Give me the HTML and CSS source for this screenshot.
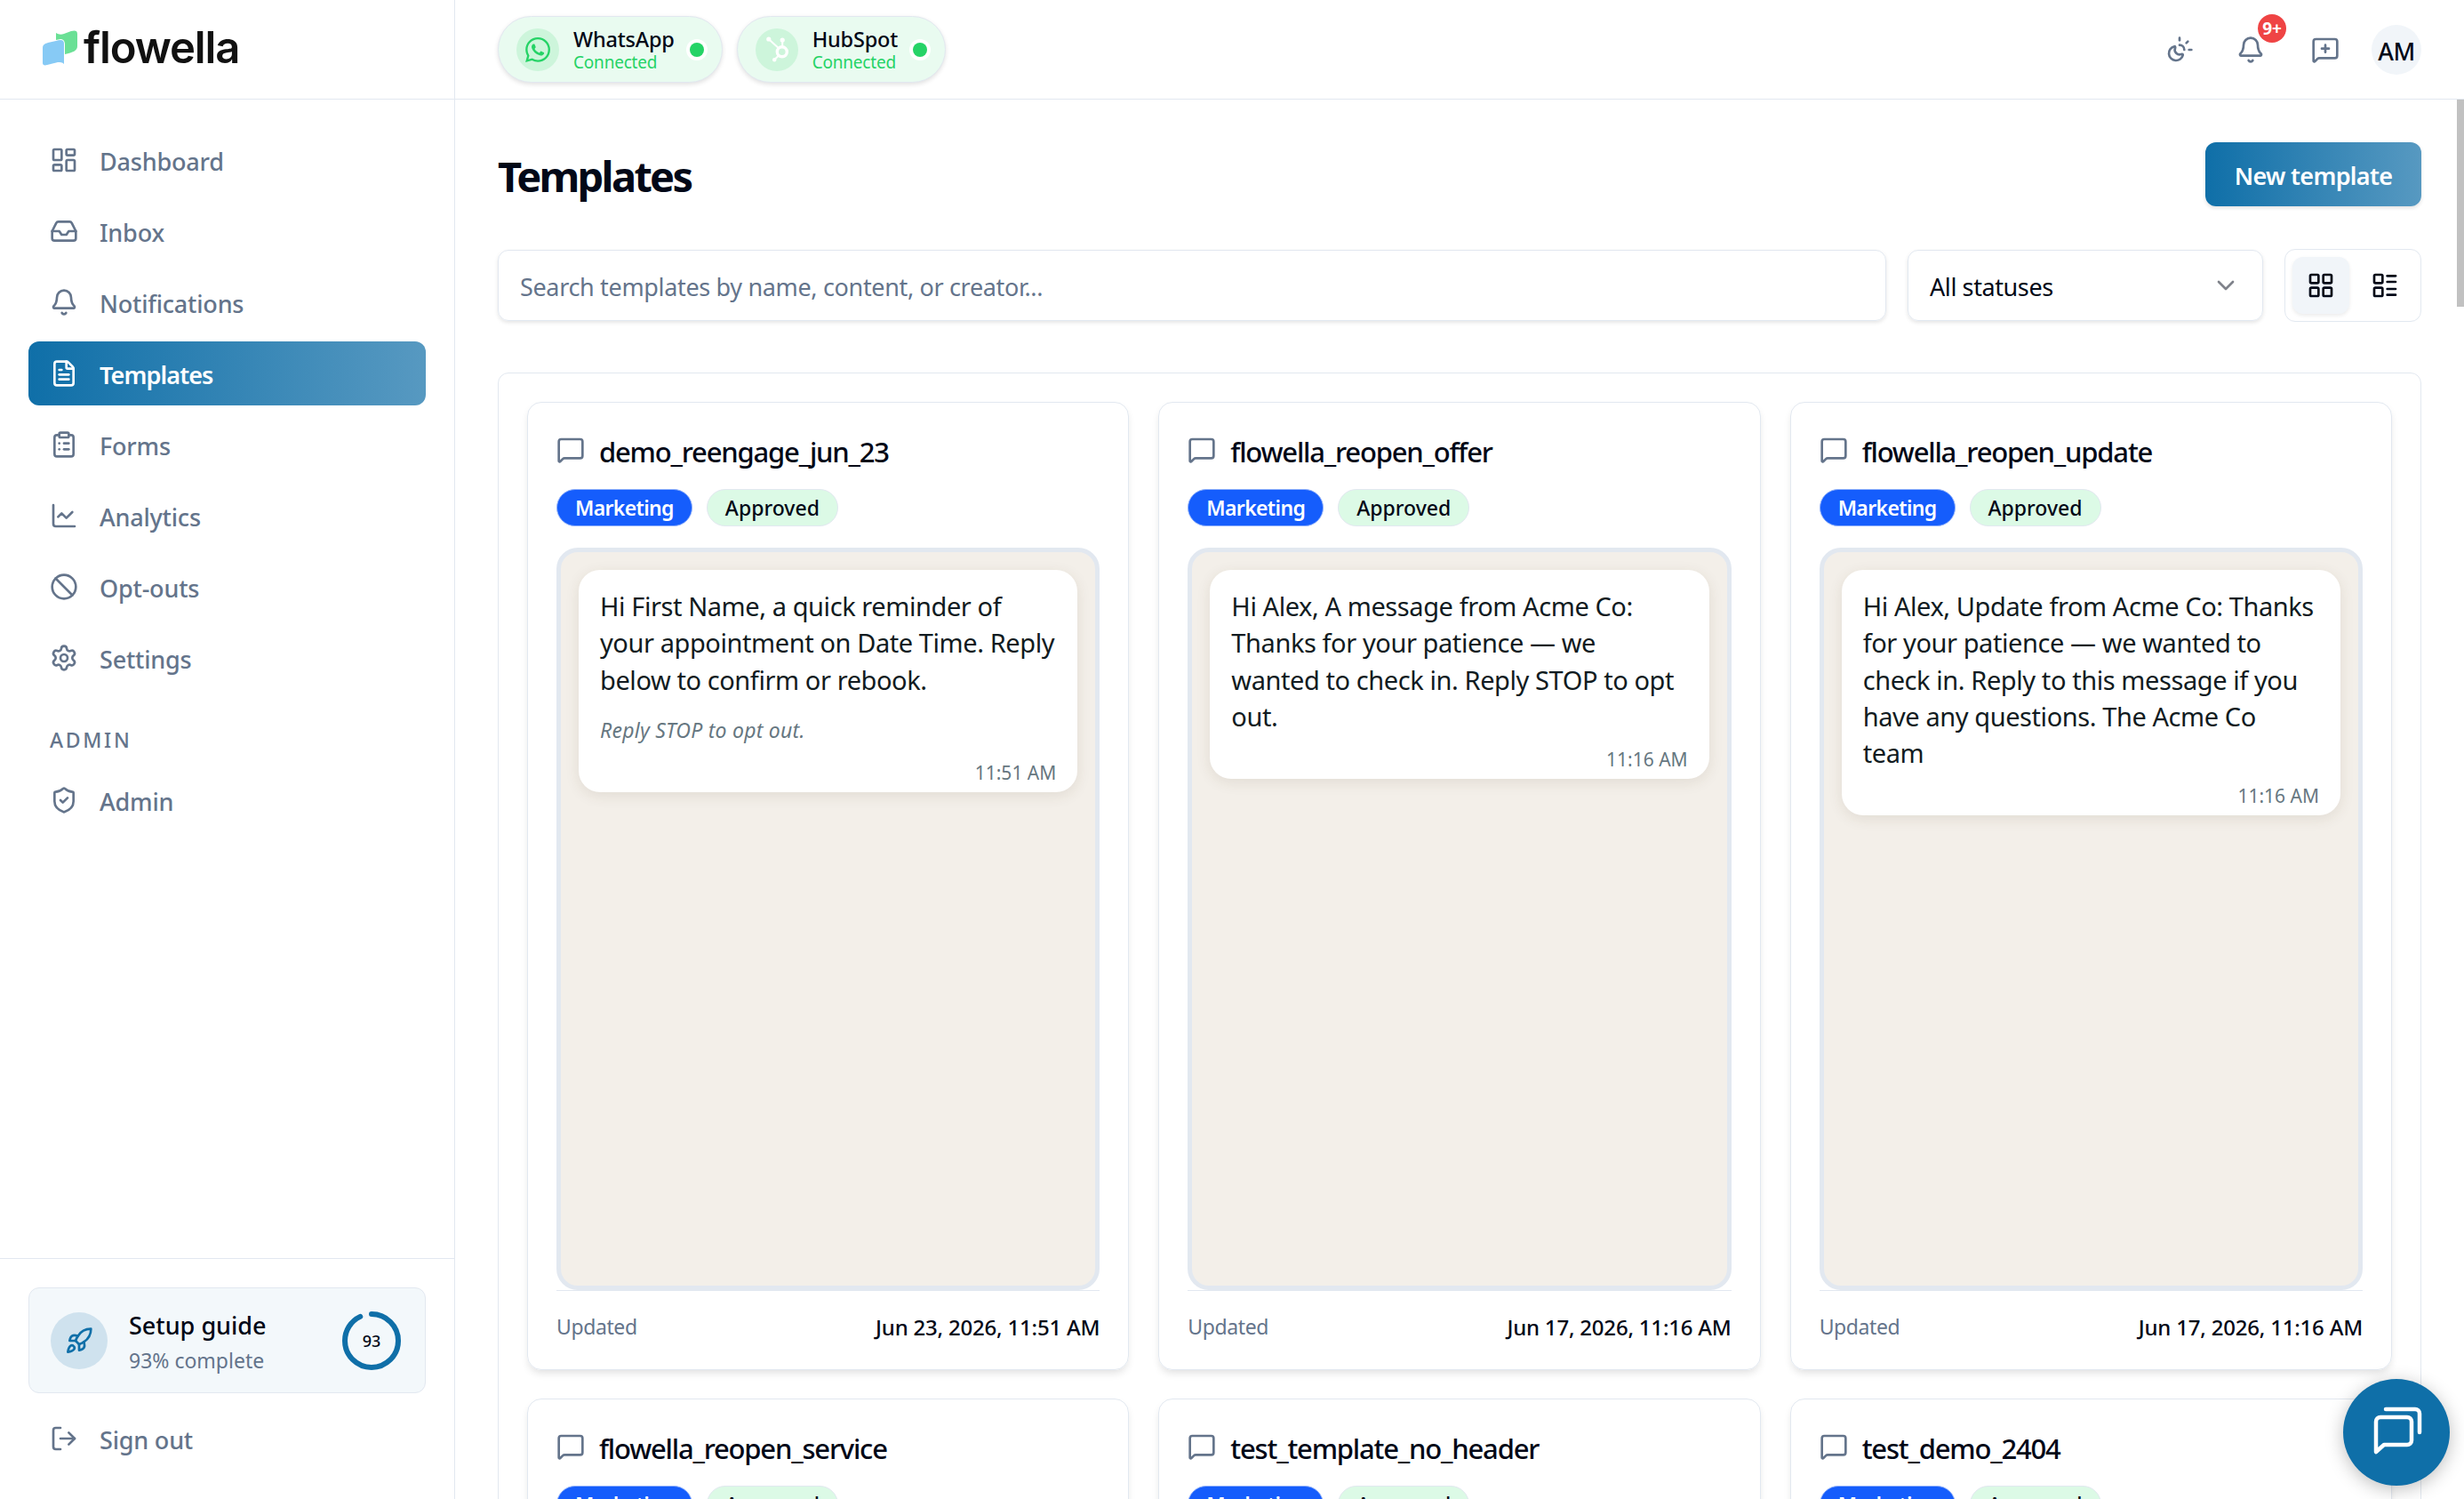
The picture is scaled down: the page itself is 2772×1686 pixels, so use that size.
FILE: index.html
```html
<!doctype html>
<html lang="en">
<head>
    <meta charset="UTF-8">
    <title>Templates - Flowella</title>
    <link rel="stylesheet" href="styles.css">
</head>
<body>
<svg class="sprite">
    <symbol id="i-message" viewBox="0 0 24 24"><path d="M22 17a2 2 0 0 1-2 2H6.828a2 2 0 0 0-1.414.586l-2.202 2.202A.71.71 0 0 1 2 21.286V5a2 2 0 0 1 2-2h16a2 2 0 0 1 2 2z"/></symbol>
    <symbol id="i-bell" viewBox="0 0 24 24"><path d="M10.268 21a2 2 0 0 0 3.464 0"/><path d="M3.262 15.326A1 1 0 0 0 4 17h16a1 1 0 0 0 .74-1.673C19.41 13.956 18 12.499 18 8A6 6 0 0 0 6 8c0 4.499-1.411 5.956-2.738 7.326"/></symbol>
</svg>
<div class="app">
    <aside class="sidebar">
        <div class="logo">
            <svg width="40" height="40" viewBox="0 0 40 40">
                <path fill="#6ae095" d="M15 3c3 2 6 2 9 1l8-3c4-1 7-1 7 3v14c0 5-5 7-14 9V16c0-4-2-6-5-6l-5 1z"/>
                <path fill="#87caf5" d="M0 20c0-4 3-5 6-6l9-2c6-2 9-1 9 3v23c-2-2-4-2-7-2L5 39c-3 1-5 0-5-2z"/>
            </svg>
            <span>flowella</span>
        </div>
        <nav class="nav">
            <a class="item"><svg class="icon" viewBox="0 0 24 24"><rect width="7" height="9" x="3" y="3" rx="1"/><rect width="7" height="5" x="14" y="3" rx="1"/><rect width="7" height="9" x="14" y="12" rx="1"/><rect width="7" height="5" x="3" y="16" rx="1"/></svg><span>Dashboard</span></a>
            <a class="item"><svg class="icon" viewBox="0 0 24 24"><path d="M22 12h-6l-2 3h-4l-2-3H2"/><path d="M5.45 5.11 2 12v6a2 2 0 0 0 2 2h16a2 2 0 0 0 2-2v-6l-3.45-6.89A2 2 0 0 0 16.76 4H7.24a2 2 0 0 0-1.79 1.11z"/></svg><span>Inbox</span></a>
            <a class="item"><svg class="icon"><use href="#i-bell"/></svg><span>Notifications</span></a>
            <a class="item active"><svg class="icon" viewBox="0 0 24 24"><path d="M6 22a2 2 0 0 1-2-2V4a2 2 0 0 1 2-2h8a2.4 2.4 0 0 1 1.704.706l3.588 3.588A2.4 2.4 0 0 1 20 8v12a2 2 0 0 1-2 2z"/><path d="M14 2v5a1 1 0 0 0 1 1h5"/><path d="M10 9H8"/><path d="M16 13H8"/><path d="M16 17H8"/></svg><span>Templates</span></a>
            <a class="item"><svg class="icon" viewBox="0 0 24 24"><rect width="8" height="4" x="8" y="2" rx="1"/><path d="M16 4h2a2 2 0 0 1 2 2v14a2 2 0 0 1-2 2H6a2 2 0 0 1-2-2V6a2 2 0 0 1 2-2h2"/><path d="M12 11h4"/><path d="M12 16h4"/><path d="M8 11h.01"/><path d="M8 16h.01"/></svg><span>Forms</span></a>
            <a class="item"><svg class="icon" viewBox="0 0 24 24"><path d="M3 3v16a2 2 0 0 0 2 2h16"/><path d="m19 9-5 5-4-4-3 3"/></svg><span>Analytics</span></a>
            <a class="item"><svg class="icon" viewBox="0 0 24 24"><circle cx="12" cy="12" r="10"/><path d="m4.9 4.9 14.2 14.2"/></svg><span>Opt-outs</span></a>
            <a class="item"><svg class="icon" viewBox="0 0 24 24"><path d="M9.671 4.136a2.34 2.34 0 0 1 4.659 0 2.34 2.34 0 0 0 3.319 1.915 2.34 2.34 0 0 1 2.33 4.033 2.34 2.34 0 0 0 0 3.831 2.34 2.34 0 0 1-2.33 4.033 2.34 2.34 0 0 0-3.319 1.915 2.34 2.34 0 0 1-4.659 0 2.34 2.34 0 0 0-3.32-1.915 2.34 2.34 0 0 1-2.33-4.033 2.34 2.34 0 0 0 0-3.831A2.34 2.34 0 0 1 6.35 6.051a2.34 2.34 0 0 0 3.319-1.915"/><circle cx="12" cy="12" r="3"/></svg><span>Settings</span></a>
            <div class="label">ADMIN</div>
            <a class="item"><svg class="icon" viewBox="0 0 24 24"><path d="M20 13c0 5-3.5 7.5-7.66 8.95a1 1 0 0 1-.67-.01C7.5 20.5 4 18 4 13V6a1 1 0 0 1 1-1c2 0 4.5-1.2 6.24-2.72a1.17 1.17 0 0 1 1.52 0C14.51 3.81 17 5 19 5a1 1 0 0 1 1 1z"/><path d="m9 12 2 2 4-4"/></svg><span>Admin</span></a>
        </nav>
        <div class="bottom">
            <div class="setup">
                <div class="rocket"><svg class="icon" viewBox="0 0 24 24"><path d="M4.5 16.5c-1.5 1.26-2 5-2 5s3.74-.5 5-2c.71-.84.7-2.13-.09-2.91a2.18 2.18 0 0 0-2.91-.09z"/><path d="m12 15-3-3a22 22 0 0 1 2-3.95A12.88 12.88 0 0 1 22 2c0 2.72-.78 7.5-6 11a22.35 22.35 0 0 1-4 2z"/><path d="M9 12H4s.55-3.03 2-4c1.62-1.08 5 0 5 0"/><path d="M12 15v5s3.03-.55 4-2c1.08-1.62 0-5 0-5"/></svg></div>
                <div class="setup-text">
                    <b>Setup guide</b>
                    <span>93% complete</span>
                </div>
                <div class="ring">
                    <svg width="72" height="72" viewBox="0 0 72 72"><circle class="track" cx="36" cy="36" r="30"/><circle class="bar" cx="36" cy="36" r="30" pathLength="100" stroke-dasharray="93 100" transform="rotate(-90 36 36)"/></svg>
                    <span>93</span>
                </div>
            </div>
            <a class="item"><svg class="icon" viewBox="0 0 24 24"><path d="m16 17 5-5-5-5"/><path d="M21 12H9"/><path d="M9 21H5a2 2 0 0 1-2-2V5a2 2 0 0 1 2-2h4"/></svg><span>Sign out</span></a>
        </div>
    </aside>

    <div class="main">
        <header class="topbar">
            <div class="pill">
                <div class="pill-icon"><svg width="28" height="28" viewBox="0 0 24 24" fill="#25d366"><path d="M17.472 14.382c-.297-.149-1.758-.867-2.03-.967-.273-.099-.471-.148-.67.15-.197.297-.767.966-.94 1.164-.173.199-.347.223-.644.075-.297-.15-1.255-.463-2.39-1.475-.883-.788-1.48-1.761-1.653-2.059-.173-.297-.018-.458.13-.606.134-.133.298-.347.446-.52.149-.174.198-.298.298-.497.099-.198.05-.371-.025-.52-.075-.149-.669-1.612-.916-2.207-.242-.579-.487-.5-.669-.51-.173-.008-.371-.01-.57-.01-.198 0-.52.074-.792.372-.272.297-1.04 1.016-1.04 2.479 0 1.462 1.065 2.875 1.213 3.074.149.198 2.096 3.2 5.077 4.487.709.306 1.262.489 1.694.625.712.227 1.36.195 1.871.118.571-.085 1.758-.719 2.006-1.413.248-.694.248-1.289.173-1.413-.074-.124-.272-.198-.57-.347m-5.421 7.403h-.004a9.87 9.87 0 0 1-5.031-1.378l-.361-.214-3.741.982.998-3.648-.235-.374a9.86 9.86 0 0 1-1.51-5.26c.001-5.45 4.436-9.884 9.888-9.884 2.64 0 5.122 1.03 6.988 2.898a9.825 9.825 0 0 1 2.893 6.994c-.003 5.45-4.437 9.884-9.885 9.884m8.413-18.297A11.815 11.815 0 0 0 12.05 0C5.495 0 .16 5.335.157 11.892c0 2.096.547 4.142 1.588 5.945L.057 24l6.305-1.654a11.882 11.882 0 0 0 5.683 1.448h.005c6.554 0 11.89-5.335 11.893-11.893a11.821 11.821 0 0 0-3.48-8.413z"/></svg></div>
                <div class="pill-text"><b>WhatsApp</b><span>Connected</span></div>
                <i class="dot"></i>
            </div>
            <div class="pill">
                <div class="pill-icon"><svg width="48" height="48" viewBox="0 0 48 48" fill="#fff" stroke="#fff"><circle cx="29.8" cy="26.3" r="5.5" fill="none" stroke-width="3.4"/><circle cx="14.8" cy="12" r="2.6" stroke="none"/><circle cx="30.2" cy="13" r="2.6" stroke="none"/><circle cx="21.2" cy="35.3" r="2.2" stroke="none"/><path d="M14.8 12l11 10M30.2 13v8M21.2 35.3l5-5" stroke-width="2"/></svg></div>
                <div class="pill-text"><b>HubSpot</b><span>Connected</span></div>
                <i class="dot"></i>
            </div>
            <div class="actions">
                <svg class="icon" viewBox="0 0 24 24"><path d="M12 2v2"/><path d="M14.837 16.385a6 6 0 1 1-7.223-7.222c.624-.147.97.66.715 1.248a4 4 0 0 0 5.26 5.259c.589-.255 1.396.09 1.248.715"/><path d="M16 12a4 4 0 0 0-4-4"/><path d="m19 5-1.256 1.256"/><path d="M20 12h2"/></svg>
                <div class="bell"><svg class="icon"><use href="#i-bell"/></svg><span class="count">9+</span></div>
                <svg class="icon" viewBox="0 0 24 24"><use href="#i-message"/><path d="M12 8v6"/><path d="M9 11h6"/></svg>
                <div class="avatar">AM</div>
            </div>
        </header>

        <div class="content">
            <div class="heading">
                <h1>Templates</h1>
                <button class="primary">New template</button>
            </div>
            <div class="filters">
                <div class="search">Search templates by name, content, or creator...</div>
                <div class="select"><span>All statuses</span><svg class="icon" viewBox="0 0 24 24"><path d="m6 9 6 6 6-6"/></svg></div>
                <div class="views">
                    <div class="view on"><svg class="icon" viewBox="0 0 24 24"><rect width="7" height="7" x="3" y="3" rx="1"/><rect width="7" height="7" x="14" y="3" rx="1"/><rect width="7" height="7" x="14" y="14" rx="1"/><rect width="7" height="7" x="3" y="14" rx="1"/></svg></div>
                    <div class="view"><svg class="icon" viewBox="0 0 24 24"><rect width="7" height="7" x="3" y="3" rx="1"/><rect width="7" height="7" x="3" y="14" rx="1"/><path d="M14 4h7"/><path d="M14 9h7"/><path d="M14 15h7"/><path d="M14 20h7"/></svg></div>
                </div>
            </div>

            <div class="grid">
                <div class="card">
                    <div class="name"><svg class="icon"><use href="#i-message"/></svg><span>demo_reengage_jun_23</span></div>
                    <div class="badges"><span class="badge marketing">Marketing</span><span class="badge approved">Approved</span></div>
                    <div class="preview">
                        <div class="bubble">
                            <p>Hi First Name, a quick reminder of your appointment on Date Time. Reply below to confirm or rebook.</p>
                            <em>Reply STOP to opt out.</em>
                            <time>11:51 AM</time>
                        </div>
                    </div>
                    <div class="foot"><span>Updated</span><b>Jun 23, 2026, 11:51 AM</b></div>
                </div>
                <div class="card">
                    <div class="name"><svg class="icon"><use href="#i-message"/></svg><span>flowella_reopen_offer</span></div>
                    <div class="badges"><span class="badge marketing">Marketing</span><span class="badge approved">Approved</span></div>
                    <div class="preview">
                        <div class="bubble">
                            <p>Hi Alex, A message from Acme Co: Thanks for your patience — we wanted to check in. Reply STOP to opt out.</p>
                            <time>11:16 AM</time>
                        </div>
                    </div>
                    <div class="foot"><span>Updated</span><b>Jun 17, 2026, 11:16 AM</b></div>
                </div>
                <div class="card">
                    <div class="name"><svg class="icon"><use href="#i-message"/></svg><span>flowella_reopen_update</span></div>
                    <div class="badges"><span class="badge marketing">Marketing</span><span class="badge approved">Approved</span></div>
                    <div class="preview">
                        <div class="bubble">
                            <p>Hi Alex, Update from Acme Co: Thanks for your patience — we wanted to check in. Reply to this message if you have any questions. The Acme Co team</p>
                            <time>11:16 AM</time>
                        </div>
                    </div>
                    <div class="foot"><span>Updated</span><b>Jun 17, 2026, 11:16 AM</b></div>
                </div>
                <div class="card">
                    <div class="name"><svg class="icon"><use href="#i-message"/></svg><span>flowella_reopen_service</span></div>
                    <div class="badges"><span class="badge marketing">Marketing</span><span class="badge approved">Approved</span></div>
                    <div class="preview"></div>
                </div>
                <div class="card">
                    <div class="name"><svg class="icon"><use href="#i-message"/></svg><span>test_template_no_header</span></div>
                    <div class="badges"><span class="badge marketing">Marketing</span><span class="badge approved">Approved</span></div>
                    <div class="preview"></div>
                </div>
                <div class="card">
                    <div class="name"><svg class="icon"><use href="#i-message"/></svg><span>test_demo_2404</span></div>
                    <div class="badges"><span class="badge marketing">Marketing</span><span class="badge approved">Approved</span></div>
                    <div class="preview"></div>
                </div>
            </div>
        </div>
        <div class="scrollbar"></div>
    </div>
</div>
<div class="chat">
    <svg width="120" height="120" viewBox="0 0 120 120"><path d="M37 82V48a5 5 0 0 1 5-5h30a5 5 0 0 1 5 5v21a5 5 0 0 1-5 5H46z"/><path d="M48 34h33a5 5 0 0 1 5 5v21"/></svg>
</div>
</body>
</html>
```

FILE: styles.css
```css
*{
    margin: 0;
    padding: 0;
    box-sizing: border-box;
}
body{
    font-family: "Noto Sans", "Open Sans", sans-serif;
    font-size: 27px;
    color: #020817;
    background: #fff;
    overflow: hidden;
}
b{
    font-weight: 500;
}
.sprite{
    display: none;
}
.icon{
    width: 32px;
    height: 32px;
    flex: none;
    fill: none;
    stroke: currentColor;
    stroke-width: 2;
    stroke-linecap: round;
    stroke-linejoin: round;
}
.app{
    display: flex;
    height: 1686px;
}

/* sidebar */
.sidebar{
    width: 512px;
    flex: none;
    display: flex;
    flex-direction: column;
    border-right: 1px solid #e2e8f0;
}
.logo{
    height: 112px;
    flex: none;
    display: flex;
    gap: 6px;
    padding: 34px 0 0 48px;
    border-bottom: 1px solid #e2e8f0;
    font-family: Inter, sans-serif;
    font-size: 49px;
    font-weight: 600;
    line-height: 40px;
    letter-spacing: -1.1px;
    color: #111;
}
.nav{
    flex: 1;
    display: flex;
    flex-direction: column;
    gap: 8px;
    padding: 32px;
}
.item{
    height: 72px;
    display: flex;
    align-items: center;
    gap: 24px;
    padding: 0 24px;
    border-radius: 12px;
    font-weight: 500;
    letter-spacing: -0.2px;
    color: #64748b;
}
.item span{
    padding-top: 3px;
}
.active{
    color: #fff;
    font-weight: 600;
    letter-spacing: -0.9px;
    background: linear-gradient(90deg, #0f6fa8, #5799c1);
}
.label{
    height: 72px;
    padding: 24px 24px 0;
    font-size: 23px;
    font-weight: 500;
    line-height: 48px;
    letter-spacing: 2.7px;
    color: #64748b;
}
.bottom{
    height: 271px;
    border-top: 1px solid #e2e8f0;
    padding: 32px;
}
.setup{
    height: 119px;
    display: flex;
    align-items: center;
    padding: 0 24px;
    margin-bottom: 15px;
    border: 1px solid #e2e8f0;
    border-radius: 12px;
    background: #f3f8fb;
}
.rocket{
    width: 64px;
    height: 64px;
    display: flex;
    align-items: center;
    justify-content: center;
    border-radius: 50%;
    background: #cfe2ee;
    color: #0f6fa8;
}
.setup-text{
    flex: 1;
    padding: 4px 0 0 24px;
}
.setup-text b{
    display: block;
    line-height: 40px;
    letter-spacing: 0;
}
.setup-text span{
    display: block;
    font-size: 23px;
    line-height: 38px;
    letter-spacing: 0;
    color: #64748b;
}
.ring{
    position: relative;
    width: 72px;
    height: 72px;
}
.ring circle{
    fill: none;
    stroke-width: 6;
    stroke-linecap: round;
}
.track{
    stroke: #f1f5f9;
}
.bar{
    stroke: #0f6fa8;
}
.ring span{
    position: absolute;
    inset: 0;
    font-size: 18px;
    font-weight: 500;
    line-height: 73px;
    text-align: center;
}

/* top bar */
.main{
    position: relative;
    flex: 1;
    min-width: 0;
}
.topbar{
    height: 112px;
    display: flex;
    align-items: center;
    gap: 16px;
    padding: 0 48px;
    border-bottom: 1px solid #e2e8f0;
}
.pill{
    height: 75px;
    display: flex;
    align-items: center;
    padding: 0 20px;
    border: 1px solid #e2e8f0;
    border-radius: 38px;
    background: #e9fbf0;
    box-shadow: 0 2px 5px rgba(0, 0, 0, .12);
}
.pill-icon{
    width: 48px;
    height: 48px;
    margin-right: 16px;
    display: flex;
    align-items: center;
    justify-content: center;
    border-radius: 50%;
    background: #cdf5db;
}
.pill-text b{
    display: block;
    font-size: 23.5px;
    line-height: 28px;
    letter-spacing: -0.2px;
}
.pill-text span{
    display: block;
    font-size: 19px;
    line-height: 24px;
    letter-spacing: -0.2px;
    color: #25d366;
}
.dot{
    width: 16px;
    height: 16px;
    margin-left: 17px;
    border-radius: 50%;
    background: #25d366;
    box-shadow: 0 0 0 4px #fff;
}
.actions{
    margin-left: auto;
    display: flex;
    align-items: center;
    color: #64748b;
}
.bell{
    position: relative;
    height: 32px;
    margin: 0 52px 0 48px;
}
.count{
    position: absolute;
    left: 24px;
    top: -24px;
    width: 32px;
    height: 32px;
    border-radius: 50%;
    background: #ef4444;
    color: #fff;
    font-size: 19px;
    font-weight: 700;
    line-height: 32px;
    text-align: center;
}
.avatar{
    width: 56px;
    height: 56px;
    margin-left: 36px;
    border-radius: 50%;
    background: #f1f5f9;
    color: #020817;
    font-weight: 500;
    line-height: 59px;
    letter-spacing: -0.5px;
    text-align: center;
}

/* page */
.content{
    height: 1574px;
    overflow: hidden;
    padding: 48px 48px 0;
}
.heading{
    height: 72px;
    display: flex;
    align-items: center;
    justify-content: space-between;
    margin-bottom: 48px;
}
h1{
    padding-top: 4px;
    font-size: 47px;
    font-weight: 700;
    letter-spacing: -2.7px;
}
.primary{
    width: 243px;
    height: 72px;
    padding-top: 2px;
    border: 0;
    border-radius: 12px;
    background: linear-gradient(90deg, #0f6fa8, #5799c1);
    box-shadow: 0 2px 4px rgba(0, 0, 0, .12);
    color: #fff;
    font: inherit;
    font-weight: 600;
    letter-spacing: -0.7px;
}
.filters{
    display: flex;
    align-items: center;
    gap: 24px;
    margin-bottom: 57px;
}
.search, .select{
    height: 80px;
    display: flex;
    align-items: center;
    padding: 3px 24px 0;
    border: 1px solid #e2e8f0;
    border-radius: 12px;
    box-shadow: 0 2px 4px rgba(0, 0, 0, .1);
}
.search{
    flex: 1;
    letter-spacing: -0.34px;
    color: #64748b;
}
.select{
    width: 400px;
    justify-content: space-between;
    letter-spacing: -0.4px;
}
.select .icon{
    margin: -3px 1px 0 0;
    opacity: .5;
}
.views{
    display: flex;
    gap: 8px;
    padding: 8px;
    border: 1px solid #e2e8f0;
    border-radius: 12px;
}
.view{
    width: 64px;
    height: 64px;
    display: flex;
    align-items: center;
    justify-content: center;
    border-radius: 12px;
}
.on{
    background: #f1f5f9;
    box-shadow: 0 2px 4px rgba(0, 0, 0, .08);
}

/* cards */
.grid{
    display: grid;
    grid-template-columns: repeat(3, 1fr);
    gap: 32px 33px;
    padding: 32px;
    border: 1px solid #e2e8f0;
    border-radius: 12px;
}
.card{
    height: 1089px;
    padding: 32px;
    border: 1px solid #e2e8f0;
    border-radius: 16px;
    box-shadow: 0 5px 10px -2px rgba(0, 0, 0, .13);
}
.name{
    height: 42px;
    display: flex;
    align-items: center;
    gap: 16px;
    font-size: 31px;
    font-weight: 500;
    letter-spacing: -1.2px;
}
.name span{
    padding-top: 3px;
}
.name .icon{
    color: #64748b;
}
.badges{
    display: flex;
    gap: 16px;
    margin: 23px 0 24px;
}
.badge{
    height: 42px;
    padding: 0 20px;
    border: 1px solid #e2e8f0;
    border-radius: 21px;
    font-size: 23px;
    font-weight: 500;
    line-height: 41px;
}
.marketing{
    background: #155dfc;
    border-color: #8fb0fb;
    color: #fff;
    font-weight: 600;
    letter-spacing: -0.65px;
}
.approved{
    background: #dcfae6;
}
.preview{
    height: 835px;
    padding: 20px;
    border: 5px solid #e2e8f0;
    border-radius: 24px;
    background: #f3efe9;
}
.bubble{
    padding: 20px 24px 5px;
    border-radius: 24px;
    background: #fff;
    box-shadow: 0 4px 16px rgba(80, 60, 30, .1);
}
.bubble p{
    font-size: 29px;
    line-height: 41.25px;
    letter-spacing: -0.42px;
    color: #111b21;
}
.bubble em{
    display: block;
    margin-top: 16px;
    font-size: 23px;
    line-height: 40px;
    letter-spacing: 0.25px;
    color: #667781;
}
.bubble time{
    display: block;
    margin-top: 12px;
    font-size: 21px;
    line-height: 33px;
    text-align: right;
    color: #667781;
}
.foot{
    display: flex;
    justify-content: space-between;
    padding-top: 24px;
    border-top: 1px solid #e2e8f0;
    font-size: 23px;
    line-height: 33px;
    letter-spacing: -0.4px;
}
.foot span{
    color: #64748b;
}
.foot b{
    font-size: 24px;
    letter-spacing: -0.2px;
}

/* overlays */
.scrollbar{
    position: absolute;
    top: 112px;
    right: 0;
    width: 8px;
    height: 233px;
    background: #c1c1c1;
}
.chat{
    position: fixed;
    right: 16px;
    bottom: 15px;
    width: 120px;
    height: 120px;
    border-radius: 50%;
    background: #0f6fa8;
    box-shadow: 0 4px 20px rgba(0, 0, 0, .25);
}
.chat path{
    fill: none;
    stroke: #fff;
    stroke-width: 4.5;
    stroke-linecap: round;
    stroke-linejoin: round;
}
```
